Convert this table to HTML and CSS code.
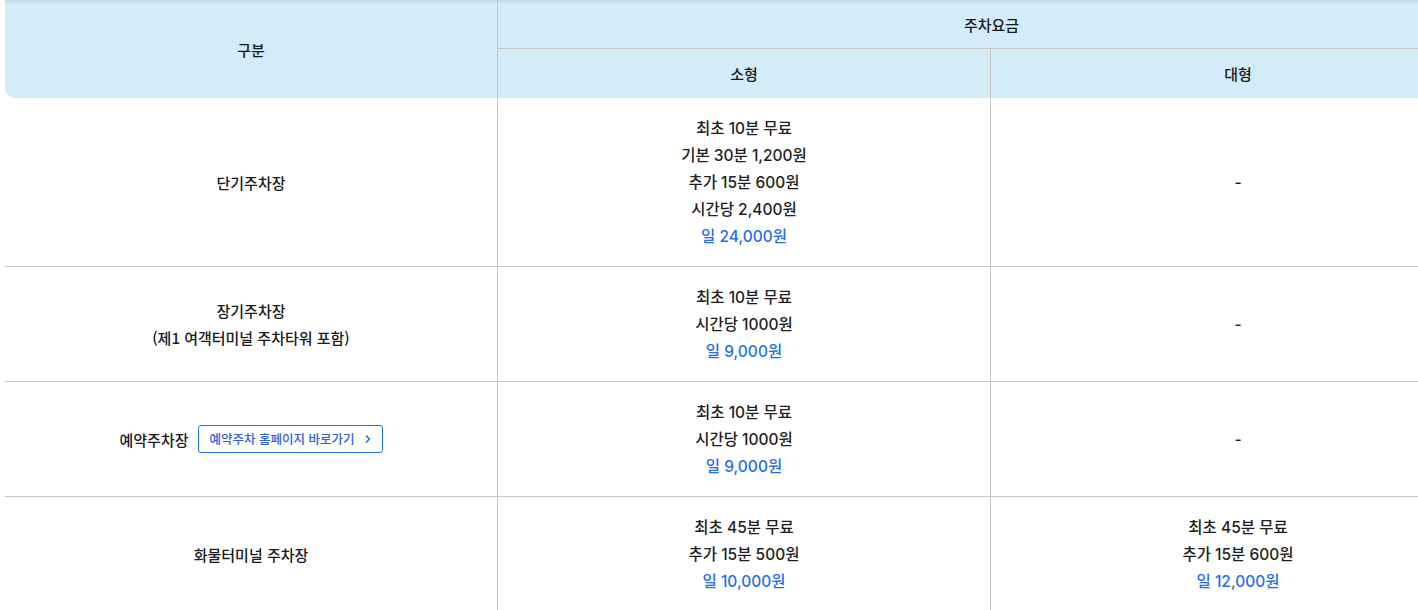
FILE: index.html
```html
<!DOCTYPE html>
<html lang="ko">
<head>
<meta charset="utf-8">
<link rel="stylesheet" href="styles.css">
</head>
<body>
<div class="wrap">
  <table class="fee-table">
    <colgroup>
      <col class="col-a">
      <col class="col-b">
      <col class="col-c">
    </colgroup>
    <thead>
      <tr>
        <th class="h-gubun" rowspan="2">구분</th>
        <th class="h-fee" colspan="2">주차요금</th>
      </tr>
      <tr>
        <th class="h-sub h-small">소형</th>
        <th class="h-sub">대형</th>
      </tr>
    </thead>
    <tbody>
      <tr>
        <td class="c-label">단기주차장</td>
        <td class="c-mid">
          <p>최초 10분 무료</p>
          <p>기본 30분 1,200원</p>
          <p>추가 15분 600원</p>
          <p>시간당 2,400원</p>
          <p class="day">일 24,000원</p>
        </td>
        <td class="c-last"><p>-</p></td>
      </tr>
      <tr>
        <td class="c-label"><p>장기주차장</p><p>(제1 여객터미널 주차타워 포함)</p></td>
        <td class="c-mid">
          <p>최초 10분 무료</p>
          <p>시간당 1000원</p>
          <p class="day">일 9,000원</p>
        </td>
        <td class="c-last"><p>-</p></td>
      </tr>
      <tr>
        <td class="c-label">
          <div class="label-row">
            <span>예약주차장</span>
            <a class="link-btn" href="#">예약주차 홈페이지 바로가기
              <svg class="chev" width="8" height="10" viewBox="0 0 8 10"><path d="M2 1.5 L5.5 5 L2 8.5" fill="none" stroke="currentColor" stroke-width="1.5"/></svg>
            </a>
          </div>
        </td>
        <td class="c-mid">
          <p>최초 10분 무료</p>
          <p>시간당 1000원</p>
          <p class="day">일 9,000원</p>
        </td>
        <td class="c-last"><p>-</p></td>
      </tr>
      <tr>
        <td class="c-label">화물터미널 주차장</td>
        <td class="c-mid">
          <p>최초 45분 무료</p>
          <p>추가 15분 500원</p>
          <p class="day">일 10,000원</p>
        </td>
        <td class="c-last">
          <p>최초 45분 무료</p>
          <p>추가 15분 600원</p>
          <p class="day">일 12,000원</p>
        </td>
      </tr>
    </tbody>
  </table>
</div>
</body>
</html>
```

FILE: styles.css
```css
html, body {
  margin: 0;
  padding: 0;
  background: #fff;
  overflow: hidden;
}

body {
  font-family: "Inter", "Noto Sans CJK KR", sans-serif;
  color: #222;
}

.wrap {
  padding-left: 5px;
  width: 1500px;
}

.fee-table {
  width: 1480px;
  border-collapse: separate;
  border-spacing: 0;
  table-layout: fixed;
}

.col-a { width: 493px; }
.col-b { width: 493px; }
.col-c { width: 494px; }

.fee-table p {
  margin: 0;
}

.fee-table th {
  background: #d4ebf8;
  font-family: "Noto Sans CJK KR", sans-serif;
  font-weight: 500;
  font-size: 15px;
  color: #1a1a1a;
  text-align: center;
  vertical-align: middle;
  padding: 0;
  position: relative;
}

.fee-table thead tr:first-child th::before {
  content: "";
  position: absolute;
  left: 0;
  right: 0;
  top: 0;
  height: 4px;
  background: linear-gradient(to bottom, rgba(120, 150, 170, 0.22), rgba(120, 150, 170, 0));
}

.h-gubun {
  border-right: 1px solid #c8c8c8;
  border-bottom-left-radius: 10px;
}

.h-fee {
  height: 48px;
  border-bottom: 1px solid #c8c8c8;
}

.h-sub {
  height: 49px;
}

.h-small {
  border-right: 1px solid #c8c8c8;
}

.fee-table td {
  text-align: center;
  vertical-align: middle;
  padding: 16.5px 0;
  border-bottom: 1px solid #c8c8c8;
  font-size: 15.5px;
  font-weight: 450;
  line-height: 27px;
  color: #1e1e1e;
}

.fee-table td.c-label {
  font-family: "Noto Sans CJK KR", sans-serif;
  font-size: 15px;
  font-weight: 500;
  color: #1a1a1a;
  border-right: 1px solid #c8c8c8;
}

.fee-table td.c-mid {
  border-right: 1px solid #c8c8c8;
}

.fee-table .day {
  color: #1f6fe6;
}

.label-row {
  display: flex;
  justify-content: center;
  align-items: center;
  gap: 9px;
}

.link-btn {
  display: inline-flex;
  align-items: center;
  gap: 9px;
  height: 26px;
  padding: 0 10px 0 11px;
  border: 1px solid #1f6fe6;
  border-radius: 3px;
  color: #2f5ed8;
  font-size: 12.5px;
  font-weight: 500;
  text-decoration: none;
  line-height: 26px;
}

.chev {
  color: #1f6fe6;
}
```
